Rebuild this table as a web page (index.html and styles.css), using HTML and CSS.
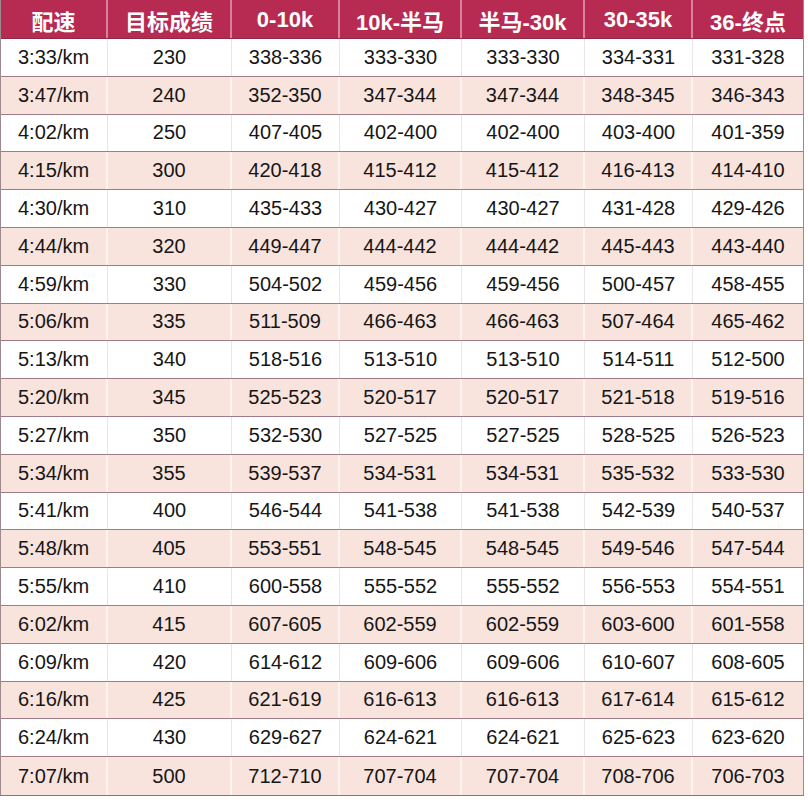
FILE: index.html
```html
<!DOCTYPE html>
<html lang="zh-CN">
<head>
<meta charset="utf-8">
<title>配速表</title>
<link rel="stylesheet" href="styles.css">
</head>
<body>
<div class="table">
  <div class="row head">
    <div class="cell">配速</div><div class="cell">目标成绩</div><div class="cell">0-10k</div><div class="cell">10k-半马</div><div class="cell">半马-30k</div><div class="cell">30-35k</div><div class="cell">36-终点</div>
  </div>
  <div class="row"><div class="cell pace">3:33/km</div><div class="cell">230</div><div class="cell">338-336</div><div class="cell">333-330</div><div class="cell">333-330</div><div class="cell">334-331</div><div class="cell">331-328</div></div>
  <div class="row alt"><div class="cell pace">3:47/km</div><div class="cell">240</div><div class="cell">352-350</div><div class="cell">347-344</div><div class="cell">347-344</div><div class="cell">348-345</div><div class="cell">346-343</div></div>
  <div class="row"><div class="cell pace">4:02/km</div><div class="cell">250</div><div class="cell">407-405</div><div class="cell">402-400</div><div class="cell">402-400</div><div class="cell">403-400</div><div class="cell">401-359</div></div>
  <div class="row alt"><div class="cell pace">4:15/km</div><div class="cell">300</div><div class="cell">420-418</div><div class="cell">415-412</div><div class="cell">415-412</div><div class="cell">416-413</div><div class="cell">414-410</div></div>
  <div class="row"><div class="cell pace">4:30/km</div><div class="cell">310</div><div class="cell">435-433</div><div class="cell">430-427</div><div class="cell">430-427</div><div class="cell">431-428</div><div class="cell">429-426</div></div>
  <div class="row alt"><div class="cell pace">4:44/km</div><div class="cell">320</div><div class="cell">449-447</div><div class="cell">444-442</div><div class="cell">444-442</div><div class="cell">445-443</div><div class="cell">443-440</div></div>
  <div class="row"><div class="cell pace">4:59/km</div><div class="cell">330</div><div class="cell">504-502</div><div class="cell">459-456</div><div class="cell">459-456</div><div class="cell">500-457</div><div class="cell">458-455</div></div>
  <div class="row alt"><div class="cell pace">5:06/km</div><div class="cell">335</div><div class="cell">511-509</div><div class="cell">466-463</div><div class="cell">466-463</div><div class="cell">507-464</div><div class="cell">465-462</div></div>
  <div class="row"><div class="cell pace">5:13/km</div><div class="cell">340</div><div class="cell">518-516</div><div class="cell">513-510</div><div class="cell">513-510</div><div class="cell">514-511</div><div class="cell">512-500</div></div>
  <div class="row alt"><div class="cell pace">5:20/km</div><div class="cell">345</div><div class="cell">525-523</div><div class="cell">520-517</div><div class="cell">520-517</div><div class="cell">521-518</div><div class="cell">519-516</div></div>
  <div class="row"><div class="cell pace">5:27/km</div><div class="cell">350</div><div class="cell">532-530</div><div class="cell">527-525</div><div class="cell">527-525</div><div class="cell">528-525</div><div class="cell">526-523</div></div>
  <div class="row alt"><div class="cell pace">5:34/km</div><div class="cell">355</div><div class="cell">539-537</div><div class="cell">534-531</div><div class="cell">534-531</div><div class="cell">535-532</div><div class="cell">533-530</div></div>
  <div class="row"><div class="cell pace">5:41/km</div><div class="cell">400</div><div class="cell">546-544</div><div class="cell">541-538</div><div class="cell">541-538</div><div class="cell">542-539</div><div class="cell">540-537</div></div>
  <div class="row alt"><div class="cell pace">5:48/km</div><div class="cell">405</div><div class="cell">553-551</div><div class="cell">548-545</div><div class="cell">548-545</div><div class="cell">549-546</div><div class="cell">547-544</div></div>
  <div class="row"><div class="cell pace">5:55/km</div><div class="cell">410</div><div class="cell">600-558</div><div class="cell">555-552</div><div class="cell">555-552</div><div class="cell">556-553</div><div class="cell">554-551</div></div>
  <div class="row alt"><div class="cell pace">6:02/km</div><div class="cell">415</div><div class="cell">607-605</div><div class="cell">602-559</div><div class="cell">602-559</div><div class="cell">603-600</div><div class="cell">601-558</div></div>
  <div class="row"><div class="cell pace">6:09/km</div><div class="cell">420</div><div class="cell">614-612</div><div class="cell">609-606</div><div class="cell">609-606</div><div class="cell">610-607</div><div class="cell">608-605</div></div>
  <div class="row alt"><div class="cell pace">6:16/km</div><div class="cell">425</div><div class="cell">621-619</div><div class="cell">616-613</div><div class="cell">616-613</div><div class="cell">617-614</div><div class="cell">615-612</div></div>
  <div class="row"><div class="cell pace">6:24/km</div><div class="cell">430</div><div class="cell">629-627</div><div class="cell">624-621</div><div class="cell">624-621</div><div class="cell">625-623</div><div class="cell">623-620</div></div>
  <div class="row alt"><div class="cell pace">7:07/km</div><div class="cell">500</div><div class="cell">712-710</div><div class="cell">707-704</div><div class="cell">707-704</div><div class="cell">708-706</div><div class="cell">706-703</div></div>
</div>
</body>
</html>
```
FILE: styles.css
```css
html, body {
  margin: 0;
  padding: 0;
  background: #ffffff;
}
body {
  font-family: "Liberation Sans", Arial, "Noto Sans CJK SC", sans-serif;
  color: #161616;
}
.table {
  width: 804px;
  height: 796px;
  display: grid;
  grid-template-rows: 39px repeat(20, 1fr);
  border-left: 1px solid #9c8a8e;
  border-right: 1px solid #9c8a8e;
  border-bottom: 1px solid #8f6f78;
  box-sizing: border-box;
}
.row {
  display: grid;
  grid-template-columns: 107px 124px 108px 122px 123px 108px 1fr;
  background: #ffffff;
  border-bottom: 1px solid #a07d86;
}
.row:last-child {
  border-bottom: none;
}
.row.alt {
  background: #f8e3dd;
}
.cell {
  display: flex;
  align-items: center;
  justify-content: center;
  font-size: 20px;
  border-right: 1px solid #ece4e4;
  white-space: nowrap;
}
.row.alt .cell {
  border-right: 2px solid #fdf3f0;
}
.cell:last-child,
.row.alt .cell:last-child {
  border-right: none;
}
.cell.pace {
  justify-content: flex-start;
  padding-left: 17px;
}
.row.head {
  background: #b72a51;
  border-bottom: 1px solid #8c2a44;
}
.row.head .cell {
  color: #ffffff;
  font-weight: bold;
  font-size: 22px;
  font-family: "Liberation Sans", Arial, "Noto Sans CJK SC", sans-serif;
  border-right: 2px solid #d9809a;
  padding-top: 2px;
}
.row.head .cell:last-child {
  border-right: none;
}
```
